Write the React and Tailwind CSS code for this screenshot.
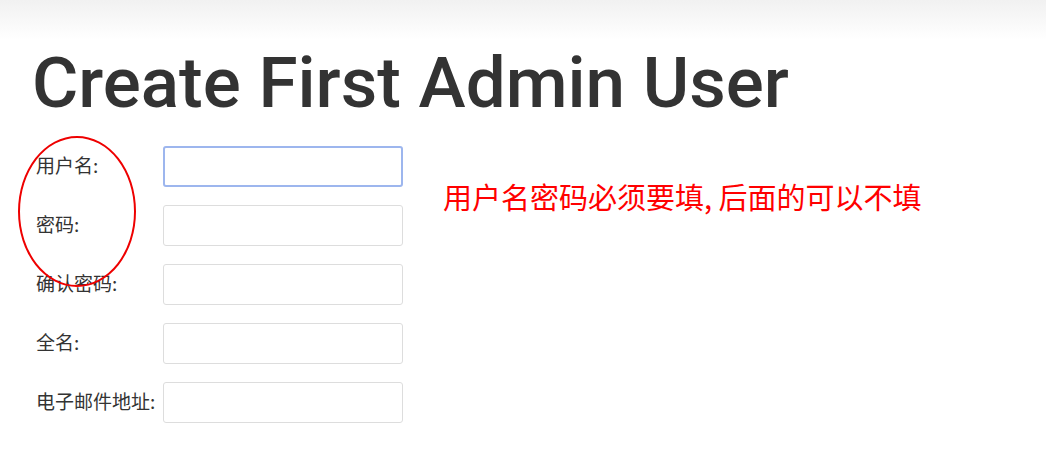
import React from 'react';

const fields = [
    { label: '用户名:', type: 'text', focused: true },
    { label: '密码:', type: 'password' },
    { label: '确认密码:', type: 'password' },
    { label: '全名:', type: 'text' },
    { label: '电子邮件地址:', type: 'email' },
];

const cjk = { fontFamily: '"Noto Sans CJK SC", "Liberation Sans", sans-serif' };

export default function App() {
    return (
        <div className="w-[1046px] h-[460px] bg-white overflow-hidden relative">
            <div className="h-[40px] bg-gradient-to-b from-[#f1f1f1] to-white" />

            <div className="pl-[32px]">
                <h1
                    className="text-[71px] font-medium leading-none text-[#333333] mt-[7px]"
                    style={{ fontFamily: 'Roboto, "Liberation Sans", sans-serif' }}
                >
                    Create First Admin User
                </h1>

                <div className="flex mt-[28px]">
                    <div className="relative flex flex-col gap-[18px]">
                        {/* red annotation ring round the required labels */}
                        <div className="absolute left-[-14px] top-[-10px] w-[118px] h-[151px] rounded-[50%] border-2 border-[#ee0000] pointer-events-none" />

                        {fields.map((f) => (
                            <div key={f.label} className="flex items-center h-[41px]">
                                <label
                                    className="w-[131px] pl-[4px] text-[19px] text-[#333333] -mt-[3px] whitespace-nowrap"
                                    style={cjk}
                                >
                                    {f.label}
                                </label>
                                <input
                                    type={f.type}
                                    className={
                                        f.focused
                                            ? 'w-[240px] h-[41px] rounded-[3px] border-2 border-[#9db6ee] outline-none bg-white'
                                            : 'w-[240px] h-[41px] rounded-[3px] border border-[#dddddd] outline-none bg-white'
                                    }
                                />
                            </div>
                        ))}
                    </div>

                    <p className="ml-[40px] mt-[36px] text-[29px] leading-none text-[#ff0000]" style={cjk}>
                        用户名密码必须要填, 后面的可以不填
                    </p>
                </div>
            </div>
        </div>
    );
}
